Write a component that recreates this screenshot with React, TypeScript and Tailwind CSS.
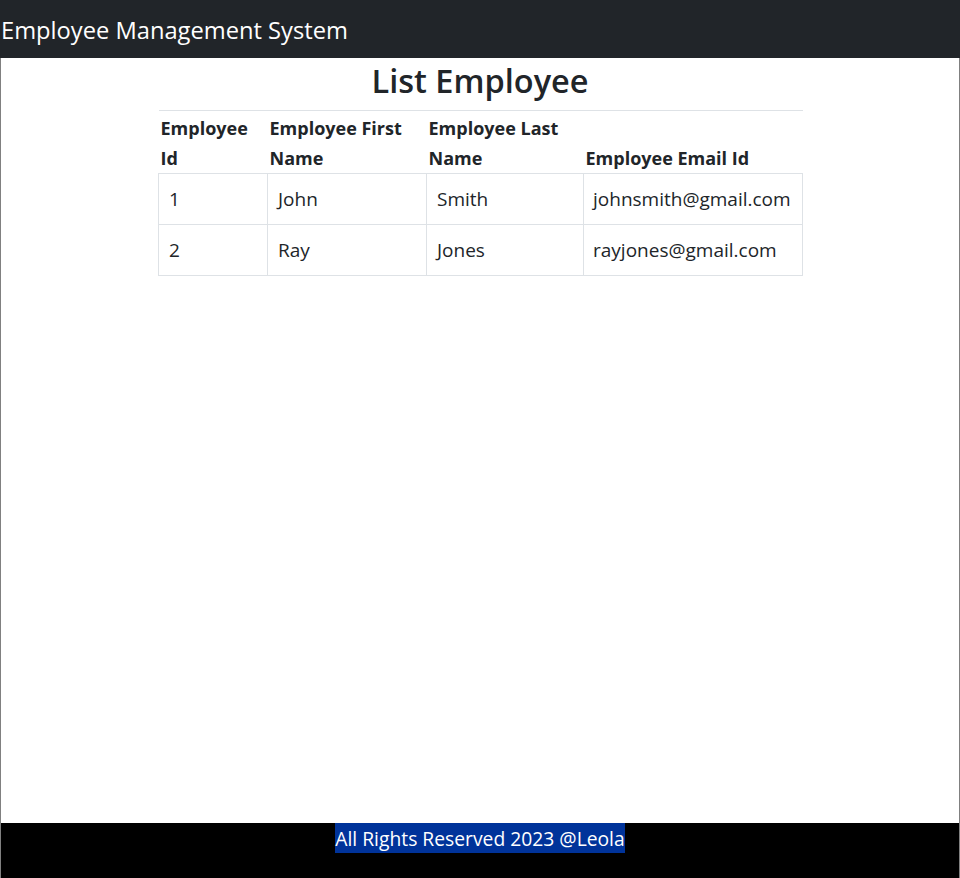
const employees = [
  { id: 1, firstName: 'John', lastName: 'Smith', email: 'johnsmith@gmail.com' },
  { id: 2, firstName: 'Ray', lastName: 'Jones', email: 'rayjones@gmail.com' },
]

const font = "font-['Segoe_UI','Open_Sans','Noto_Sans',sans-serif]"

export default function App() {
  return (
    <div className={`flex min-h-screen flex-col bg-white text-[#212529] ${font}`}>
      <header className="flex h-[58px] items-center bg-[#212529] pl-[1px] pt-[4px]">
        <span className="text-[23.7px] leading-none text-white">Employee Management System</span>
      </header>

      <main className="flex-1 border-x border-[#808080]">
        <div className="mx-auto w-[644px]">
          <h2 className="mb-[6px] text-center text-[32.5px] leading-[46px] font-semibold">List Employee</h2>
          <table className="w-full table-fixed border-collapse">
            <colgroup>
              <col className="w-[109px]" />
              <col className="w-[159px]" />
              <col className="w-[157px]" />
              <col className="w-[219px]" />
            </colgroup>
            <thead>
              <tr className="border-t border-[#dee2e6] text-left align-bottom text-[18px] leading-[30px] font-bold">
                <th className="px-[2px] pt-[2px]">Employee Id</th>
                <th className="px-[2px] pt-[2px]">Employee First Name</th>
                <th className="px-[2px] pt-[2px]">Employee Last Name</th>
                <th className="px-[2px] pt-[2px]">Employee Email Id</th>
              </tr>
            </thead>
            <tbody className="text-[19px]">
              {employees.map((emp) => (
                <tr key={emp.id} className="h-[51px]">
                  <td className="border border-[#dee2e6] px-[10px]">{emp.id}</td>
                  <td className="border border-[#dee2e6] px-[10px]">{emp.firstName}</td>
                  <td className="border border-[#dee2e6] px-[10px]">{emp.lastName}</td>
                  <td className="border border-[#dee2e6] px-[9px]">{emp.email}</td>
                </tr>
              ))}
            </tbody>
          </table>
        </div>
      </main>

      <footer className="h-[55px] border-x border-[#808080] bg-black text-center">
        <span className="inline-block h-[30px] bg-[#00339a] text-[19.3px] leading-[32px] text-white">All Rights Reserved 2023 @Leola</span>
      </footer>
    </div>
  )
}
